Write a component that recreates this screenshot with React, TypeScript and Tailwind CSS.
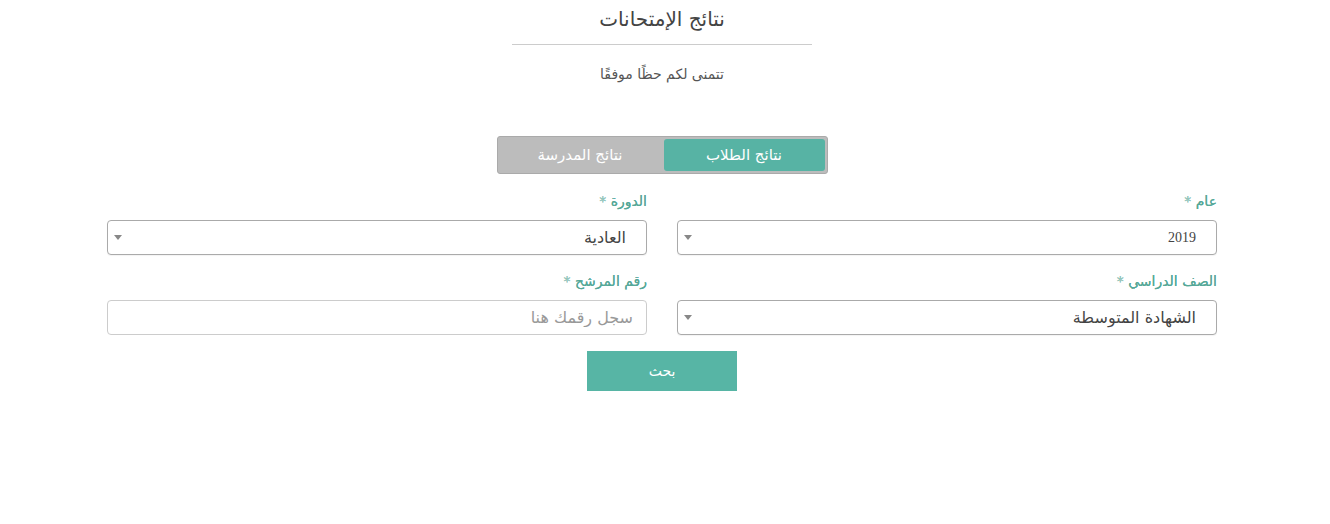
import { useState } from 'react';

const font = { fontFamily: '"DejaVu Sans", "Noto Sans", sans-serif' };

function Caret() {
  return (
    <svg width="8" height="5" viewBox="0 0 8 5" className="shrink-0" aria-hidden="true">
      <path d="M0 0h8L4 5z" fill="#888" />
    </svg>
  );
}

function Field({ label, children }: { label: string; children: React.ReactNode }) {
  return (
    <div className="flex flex-col">
      <label className="mb-[9px] h-[20px] text-[14px] leading-[20px] text-[#56a898] [text-shadow:0_0_0.4px_#56a898]">
        {label} <span className="text-[#9cc9c0]">*</span>
      </label>
      {children}
    </div>
  );
}

function Select({ value, serif = false }: { value: string; serif?: boolean }) {
  return (
    <div className="flex h-[35px] items-center justify-between rounded-[4px] border border-[#aaa] bg-white pl-[6px] pr-[20px] shadow-[0_1px_1px_rgba(0,0,0,0.05)]">
      <span
        className={serif ? 'text-[14px] text-[#444]' : 'text-[16px] text-[#444]'}
        style={serif ? { fontFamily: '"Liberation Serif", serif' } : undefined}
      >
        {value}
      </span>
      <Caret />
    </div>
  );
}

export default function App() {
  const [tab, setTab] = useState<'students' | 'school'>('students');

  return (
    <div dir="rtl" className="min-h-[524px] bg-white pr-[6px]" style={font}>
      <div className="mx-auto w-[1110px]">
        <div className="flex flex-col items-center pt-[5px]">
          <h1 className="text-[20px] leading-[28px] text-[#444]">نتائج الإمتحانات</h1>
          <div className="mt-[11px] h-px w-[300px] bg-[#ccc]" />
          <p className="mt-[19px] text-[14px] leading-[20px] text-[#555]">تتمنى لكم حظًا موفقًا</p>
        </div>

        <div className="mt-[52px] flex justify-center">
          <div className="flex h-[38px] w-[331px] gap-[3px] rounded-[3px] border border-[#aaa] bg-[#bcbcbc] p-[2px]">
            <button
              type="button"
              onClick={() => setTab('students')}
              className={`flex-1 rounded-[3px] text-[15px] text-white ${tab === 'students' ? 'bg-[#57b3a4]' : ''}`}
            >
              نتائج الطلاب
            </button>
            <button
              type="button"
              onClick={() => setTab('school')}
              className={`flex-1 rounded-[3px] text-[15px] text-white ${tab === 'school' ? 'bg-[#57b3a4]' : ''}`}
            >
              نتائج المدرسة
            </button>
          </div>
        </div>

        <div className="mt-[17px] grid grid-cols-2 gap-x-[30px] gap-y-[16px]">
          <Field label="عام">
            <Select value="2019" serif />
          </Field>
          <Field label="الدورة">
            <Select value="العادية" />
          </Field>
          <Field label="الصف الدراسي">
            <Select value="الشهادة المتوسطة" />
          </Field>
          <Field label="رقم المرشح">
            <input
              placeholder="سجل رقمك هنا"
              className="h-[35px] rounded-[4px] border border-[#ccc] bg-white px-[13px] text-[16px] text-[#444] outline-none placeholder:text-[#999]"
            />
          </Field>
        </div>

        <div className="mt-[16px] flex justify-center">
          <button type="button" className="h-[40px] w-[150px] bg-[#57b5a5] text-[14px] text-white">
            بحث
          </button>
        </div>
      </div>
    </div>
  );
}
